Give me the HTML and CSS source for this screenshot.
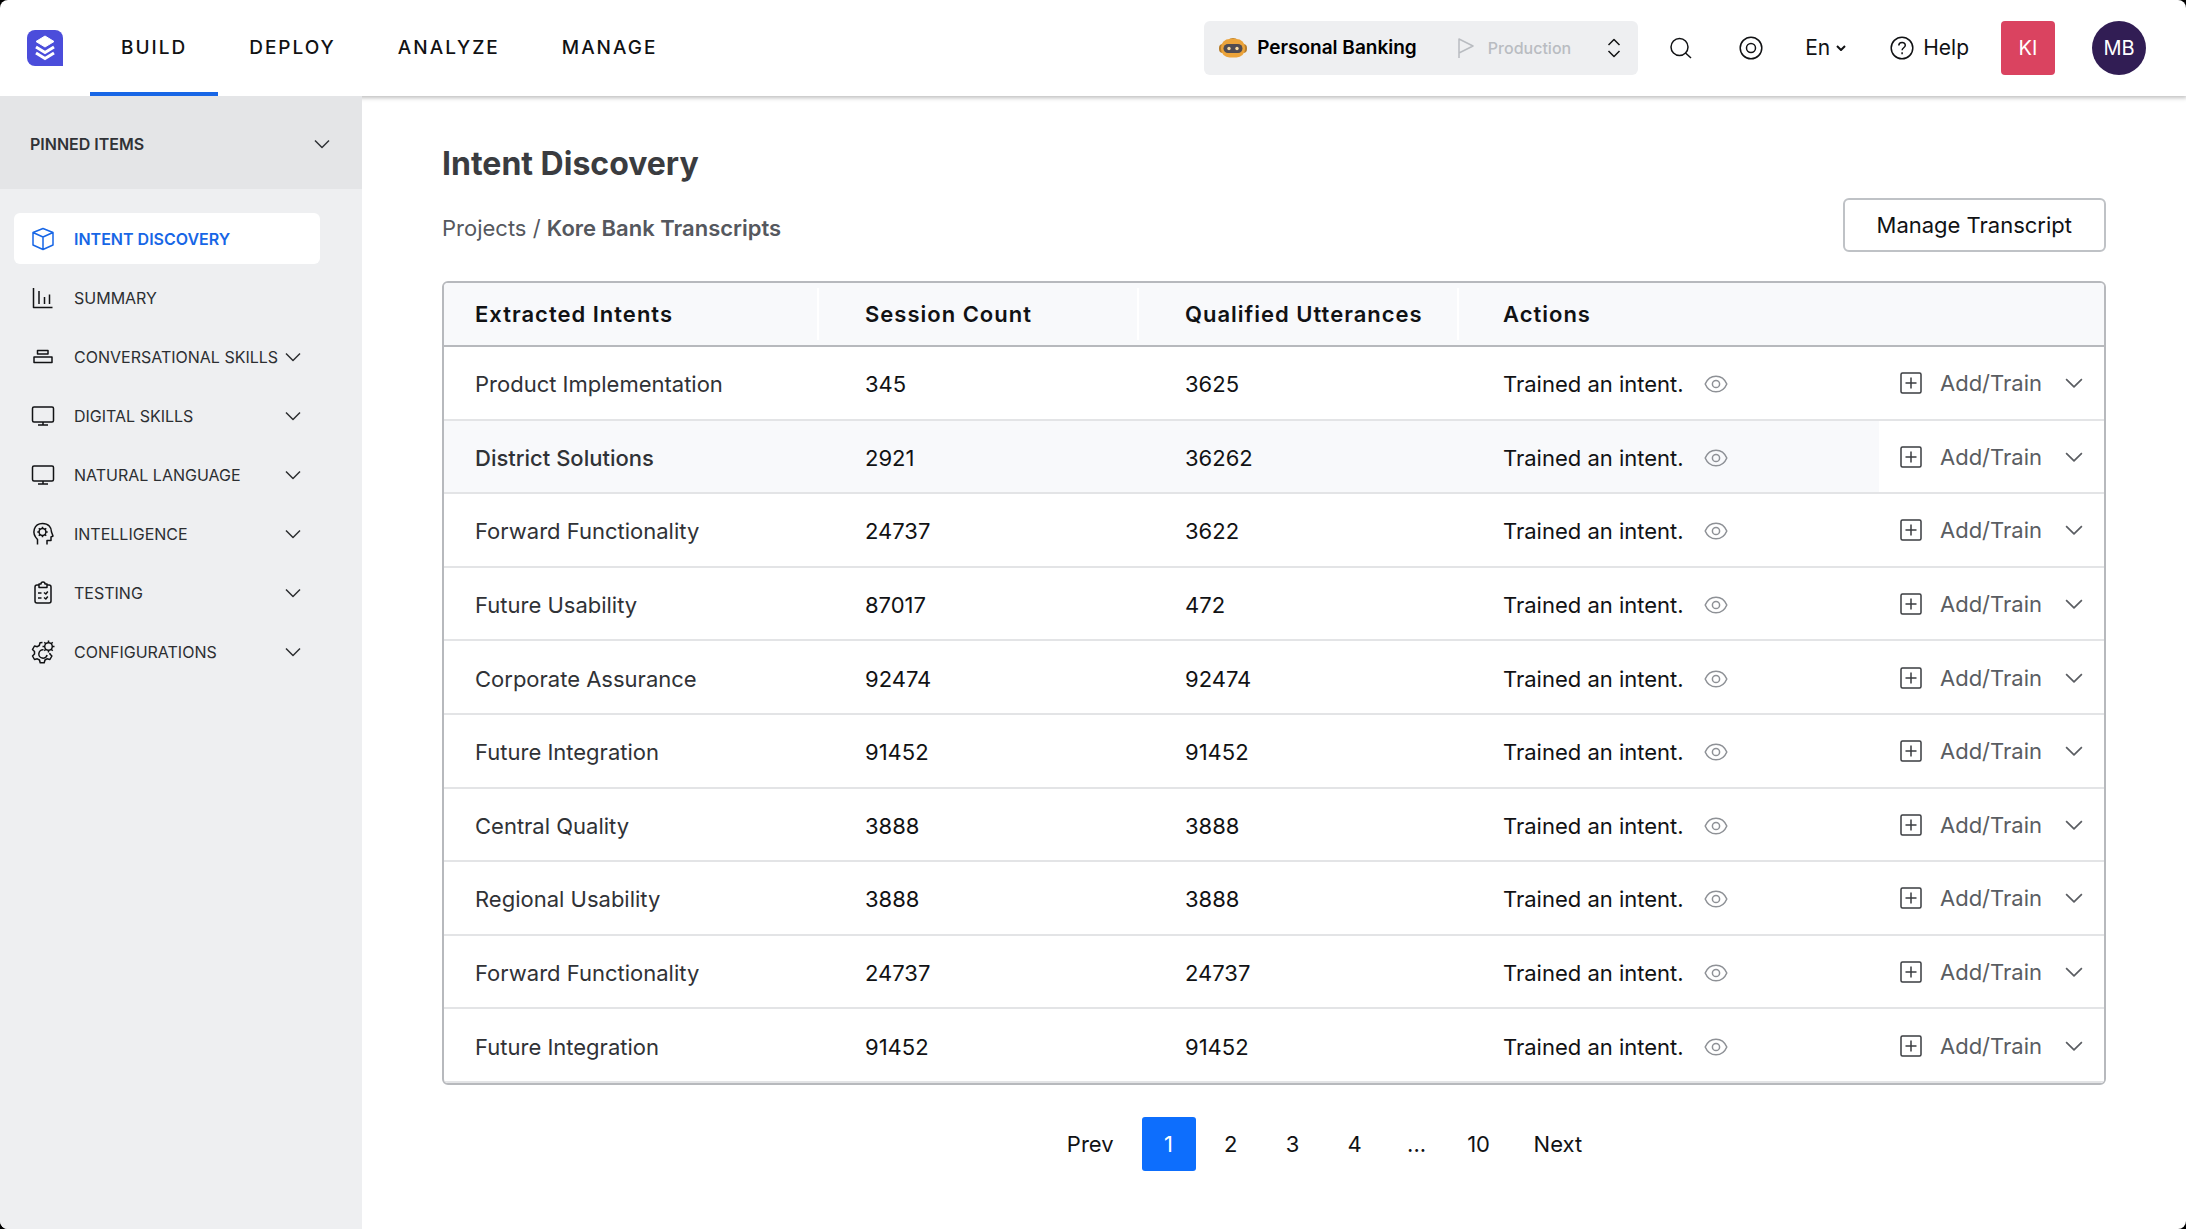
FILE: index.html
```html
<!DOCTYPE html>
<html lang="en">
<head>
<meta charset="utf-8">
<meta name="viewport" content="width=device-width, initial-scale=1">
<title>Intent Discovery</title>
<link rel="stylesheet" href="styles.css">
</head>
<body>
<svg class="sprite" aria-hidden="true">
  <symbol id="chevron" viewBox="0 0 16 10"><path d="M1 1.5l7 7 7-7"/></symbol>
  <symbol id="eye" viewBox="0 0 24 18"><path d="M1.2 9C3.2 4.200 7 1.200 12 1.200S20.800 4.200 22.800 9C20.800 13.800 17 16.800 12 16.800S3.200 13.800 1.200 9z"/><circle cx="12" cy="9" r="3.600"/></symbol>
  <symbol id="plus" viewBox="0 0 22 22"><rect x="1" y="1" width="20" height="20" rx="1.500"/><path d="M11 5.500v11M5.500 11h11"/></symbol>
  <symbol id="monitor" viewBox="0 0 24 24"><rect x="1.500" y="3" width="21" height="15" rx="1.500"/><path d="M12 18v3M7 21h10"/></symbol>
</svg>
<div class="app">
  <header class="topbar">
    <a class="logo" href="#" aria-label="Home">
      <svg width="36" height="36" viewBox="0 0 36 36"><path d="M8 0h20a8 8 0 0 1 8 8v28H8a8 8 0 0 1-8-8V8a8 8 0 0 1 8-8z" fill="#4b4ddb"/><path d="M18 6l9 5.500-9 5.500-9-5.500z" fill="#fff" stroke="#fff" stroke-linejoin="round"/><path d="M9 17l9 5.500 9-5.500M9 23l9 5.500 9-5.500" fill="none" stroke="#fff" stroke-width="3"/></svg>
    </a>
    <nav class="tabs" aria-label="Main">
      <a class="tab tab-active" href="#">BUILD</a>
      <a class="tab" href="#">DEPLOY</a>
      <a class="tab" href="#">ANALYZE</a>
      <a class="tab" href="#">MANAGE</a>
    </nav>
    <button class="switcher" type="button">
      <svg width="28" height="20" viewBox="0 0 28 20"><ellipse cx="14" cy="2" rx="4" ry="2" fill="#c98a2c"/><rect x="0" y="6" width="28" height="9" rx="4" fill="#b87d2a"/><rect x="2" y="1" width="24" height="18.500" rx="8.500" fill="#eba33a"/><rect x="4.500" y="6" width="19" height="9" rx="4.500" fill="#4f4b52"/><circle cx="10" cy="10.500" r="1.700" fill="#f7d9a0"/><circle cx="18" cy="10.500" r="1.700" fill="#f7d9a0"/></svg>
      <span class="bot-name">Personal Banking</span>
      <svg class="line-icon flag" width="16" height="20" viewBox="0 0 16 20"><path d="M1 20V1l14 7-14 7"/></svg>
      <span class="env-name">Production</span>
      <svg class="line-icon" width="14" height="20" viewBox="0 0 14 20"><path d="M1.500 7L7 1.500 12.500 7M1.500 13L7 18.500l5.500-5.500"/></svg>
    </button>
    <div class="tools">
      <button class="tool" type="button" aria-label="Search"><svg class="line-icon" width="22" height="22" viewBox="0 0 22 22"><circle cx="9.500" cy="10" r="8.500"/><path d="M15.500 16l5.500 5"/></svg></button>
      <button class="tool" type="button" aria-label="Activity"><svg class="line-icon" width="24" height="24" viewBox="0 0 24 24"><circle cx="12" cy="12" r="10.800"/><circle cx="12" cy="12" r="4.500"/></svg></button>
      <button class="tool lang" type="button">En <svg class="line-icon thick" width="10" height="6" viewBox="0 0 10 6"><path d="M1 1l4 4 4-4"/></svg></button>
      <a class="tool help" href="#"><svg class="line-icon" width="24" height="24" viewBox="0 0 24 24"><circle cx="12" cy="12" r="10.800"/><path d="M8.800 9.500c0-4 6.500-4 6.500-.3 0 2.600-3.200 2.500-3.200 5.100M12.100 16.300v1.900"/></svg>Help</a>
      <button class="workspace" type="button">KI</button>
      <button class="avatar" type="button">MB</button>
    </div>
  </header>

  <div class="body">
    <aside class="sidebar">
      <button class="pinned" type="button">PINNED ITEMS <svg class="line-icon" width="16" height="10"><use href="#chevron"/></svg></button>
      <nav class="menu" aria-label="Build">
        <a class="item item-active" href="#"><svg class="line-icon" width="24" height="24" viewBox="0 0 24 24"><path d="M12 1.500l10 4v12.500l-10 4.500-10-4.500V5.500zM2 5.500l10 4.500 10-4.500M12 10v12.500"/></svg>INTENT DISCOVERY</a>
        <a class="item" href="#"><svg class="line-icon" width="24" height="24" viewBox="0 0 24 24"><path d="M2.500 2v19.500H21.500M8 5v13M13.500 11v7M18.500 8.500v9.500"/></svg>SUMMARY</a>
        <a class="item" href="#"><svg class="line-icon" width="24" height="24" viewBox="0 0 24 24"><rect x="6.500" y="5.500" width="10.500" height="3.500"/><rect x="3" y="12" width="18" height="5.500"/></svg>CONVERSATIONAL SKILLS<svg class="line-icon caret" width="16" height="10"><use href="#chevron"/></svg></a>
        <a class="item" href="#"><svg class="line-icon" width="24" height="24"><use href="#monitor"/></svg>DIGITAL SKILLS<svg class="line-icon caret" width="16" height="10"><use href="#chevron"/></svg></a>
        <a class="item" href="#"><svg class="line-icon" width="24" height="24"><use href="#monitor"/></svg>NATURAL LANGUAGE<svg class="line-icon caret" width="16" height="10"><use href="#chevron"/></svg></a>
        <a class="item" href="#"><svg class="line-icon" width="24" height="24" viewBox="0 0 24 24"><path d="M6.500 22.500v-5C0 11 3 1.500 11.500 1.500c6 0 9 4 9 8.500l1.500 4-2 1v3.500h-4v4"/><circle cx="11.500" cy="10" r="3.400"/><path d="M11.500 4.800v1.800M11.500 13.400v1.800M6.300 10h1.800M14.900 10h1.800M7.800 6.300l1.300 1.300M13.900 12.400l1.300 1.300M15.200 6.300l-1.300 1.300M9.100 12.400l-1.300 1.300"/></svg>INTELLIGENCE<svg class="line-icon caret" width="16" height="10"><use href="#chevron"/></svg></a>
        <a class="item" href="#"><svg class="line-icon" width="24" height="24" viewBox="0 0 24 24"><path d="M8 4H6a2 2 0 0 0-2 2v14a2 2 0 0 0 2 2h12a2 2 0 0 0 2-2V6a2 2 0 0 0-2-2h-2M8 3h2a2 2 0 0 1 4 0h2v3.500H8zM7 12h3.500M7 17h3.500M13 11.500l1.800 1.500 2-2.500M13 16.500l1.800 1.500 2-2.500"/></svg>TESTING<svg class="line-icon caret" width="16" height="10"><use href="#chevron"/></svg></a>
        <a class="item" href="#"><svg class="line-icon" width="24" height="24" viewBox="0 0 24 24"><path d="M11.500 2.500L9 2.800l-.7 2.700-2 1.200L3.500 6 1.500 9.500l2 2v2.500l-2 2 2 3.500 2.800-.7 2.200 1.200.7 2.700h4l.8-2.700 2-1.200 2.900.7 2-3.500-2-2v-1"/><path d="M12.500 9.800a4.200 4.200 0 1 0 3.600 5.200"/><circle cx="17.500" cy="6.500" r="3.800"/><path d="M17.500.5v2.200M17.500 10.300v2.200M11.500 6.500h2.200M21.300 6.500h2.200M13.300 2.300l1.500 1.500M20.200 9.200l1.500 1.500M21.700 2.300l-1.500 1.500M14.800 9.200l-1.500 1.500"/></svg>CONFIGURATIONS<svg class="line-icon caret" width="16" height="10"><use href="#chevron"/></svg></a>
      </nav>
    </aside>

    <main class="content">
      <h1 class="title">Intent Discovery</h1>
      <div class="subhead">
        <nav class="crumbs" aria-label="Breadcrumb"><a href="#">Projects</a> / <strong>Kore Bank Transcripts</strong></nav>
        <button class="outline-button" type="button">Manage Transcript</button>
      </div>
      <div class="table-card">
        <table class="intents">
          <thead>
            <tr><th class="col-intent" scope="col">Extracted Intents</th><th class="col-count" scope="col">Session Count</th><th class="col-count" scope="col">Qualified Utterances</th><th scope="col">Actions</th><td class="col-train"></td></tr>
          </thead>
          <tbody>
            <tr><td>Product Implementation</td><td>345</td><td>3625</td><td><span class="status">Trained an intent. <svg class="line-icon" width="24" height="18"><use href="#eye"/></svg></span></td><td><button class="train" type="button"><svg class="line-icon" width="22" height="22"><use href="#plus"/></svg>Add/Train<svg class="line-icon caret" width="18" height="12"><use href="#chevron"/></svg></button></td></tr>
            <tr class="row-current"><td>District Solutions</td><td>2921</td><td>36262</td><td><span class="status">Trained an intent. <svg class="line-icon" width="24" height="18"><use href="#eye"/></svg></span></td><td><button class="train" type="button"><svg class="line-icon" width="22" height="22"><use href="#plus"/></svg>Add/Train<svg class="line-icon caret" width="18" height="12"><use href="#chevron"/></svg></button></td></tr>
            <tr><td>Forward Functionality</td><td>24737</td><td>3622</td><td><span class="status">Trained an intent. <svg class="line-icon" width="24" height="18"><use href="#eye"/></svg></span></td><td><button class="train" type="button"><svg class="line-icon" width="22" height="22"><use href="#plus"/></svg>Add/Train<svg class="line-icon caret" width="18" height="12"><use href="#chevron"/></svg></button></td></tr>
            <tr><td>Future Usability</td><td>87017</td><td>472</td><td><span class="status">Trained an intent. <svg class="line-icon" width="24" height="18"><use href="#eye"/></svg></span></td><td><button class="train" type="button"><svg class="line-icon" width="22" height="22"><use href="#plus"/></svg>Add/Train<svg class="line-icon caret" width="18" height="12"><use href="#chevron"/></svg></button></td></tr>
            <tr><td>Corporate Assurance</td><td>92474</td><td>92474</td><td><span class="status">Trained an intent. <svg class="line-icon" width="24" height="18"><use href="#eye"/></svg></span></td><td><button class="train" type="button"><svg class="line-icon" width="22" height="22"><use href="#plus"/></svg>Add/Train<svg class="line-icon caret" width="18" height="12"><use href="#chevron"/></svg></button></td></tr>
            <tr><td>Future Integration</td><td>91452</td><td>91452</td><td><span class="status">Trained an intent. <svg class="line-icon" width="24" height="18"><use href="#eye"/></svg></span></td><td><button class="train" type="button"><svg class="line-icon" width="22" height="22"><use href="#plus"/></svg>Add/Train<svg class="line-icon caret" width="18" height="12"><use href="#chevron"/></svg></button></td></tr>
            <tr><td>Central Quality</td><td>3888</td><td>3888</td><td><span class="status">Trained an intent. <svg class="line-icon" width="24" height="18"><use href="#eye"/></svg></span></td><td><button class="train" type="button"><svg class="line-icon" width="22" height="22"><use href="#plus"/></svg>Add/Train<svg class="line-icon caret" width="18" height="12"><use href="#chevron"/></svg></button></td></tr>
            <tr><td>Regional Usability</td><td>3888</td><td>3888</td><td><span class="status">Trained an intent. <svg class="line-icon" width="24" height="18"><use href="#eye"/></svg></span></td><td><button class="train" type="button"><svg class="line-icon" width="22" height="22"><use href="#plus"/></svg>Add/Train<svg class="line-icon caret" width="18" height="12"><use href="#chevron"/></svg></button></td></tr>
            <tr><td>Forward Functionality</td><td>24737</td><td>24737</td><td><span class="status">Trained an intent. <svg class="line-icon" width="24" height="18"><use href="#eye"/></svg></span></td><td><button class="train" type="button"><svg class="line-icon" width="22" height="22"><use href="#plus"/></svg>Add/Train<svg class="line-icon caret" width="18" height="12"><use href="#chevron"/></svg></button></td></tr>
            <tr><td>Future Integration</td><td>91452</td><td>91452</td><td><span class="status">Trained an intent. <svg class="line-icon" width="24" height="18"><use href="#eye"/></svg></span></td><td><button class="train" type="button"><svg class="line-icon" width="22" height="22"><use href="#plus"/></svg>Add/Train<svg class="line-icon caret" width="18" height="12"><use href="#chevron"/></svg></button></td></tr>
          </tbody>
        </table>
      </div>
      <nav class="pager" aria-label="Pages">
        <a class="page" href="#">Prev</a>
        <a class="page page-active" href="#" aria-current="page">1</a>
        <a class="page" href="#">2</a>
        <a class="page" href="#">3</a>
        <a class="page" href="#">4</a>
        <span class="page">...</span>
        <a class="page" href="#">10</a>
        <a class="page" href="#">Next</a>
      </nav>
    </main>
  </div>
</div>
</body>
</html>
```
FILE: styles.css
```css
* { box-sizing: border-box; }
body { margin: 0; background: #000; color: #111214; font-family: Inter, "Liberation Sans", sans-serif; font-size: 22px; line-height: 28px; }
button { margin: 0; padding: 0; border: 0; background: none; color: inherit; font: inherit; cursor: pointer; }
a { color: inherit; text-decoration: none; }
svg { flex: none; display: block; }
.sprite { position: absolute; width: 0; height: 0; }
.line-icon { fill: none; stroke: currentColor; stroke-width: 1.5; stroke-linejoin: round; }
.thick { stroke-width: 2; }
.caret { margin-left: auto; }

.app { display: flex; flex-direction: column; min-height: 100vh; overflow: hidden; border-radius: 8px; background: #fff; }
.body { display: flex; flex: 1; }

/* Top bar */
.topbar { display: flex; align-items: center; height: 96px; padding: 0 40px 0 27px; box-shadow: 0 1px 4px 1px rgba(0, 0, 0, .25); font-size: 20px; }
.logo { margin-right: 27px; }
.tabs { display: flex; align-self: stretch; margin-right: auto; }
.tab { display: flex; align-items: center; padding: 6px 31px 2px; border-bottom: 4px solid transparent; font-size: 19px; font-weight: 500; letter-spacing: 2px; }
.tab-active { border-bottom-color: #1766e6; }
.switcher { display: flex; align-items: center; width: 434px; height: 54px; padding: 0 17px 0 15px; border-radius: 6px; background: #eeeff1; }
.bot-name { margin-left: 10px; color: #000; font-size: 19px; font-weight: 600; }
.flag { margin-left: auto; color: #b9bcc1; }
.env-name { margin: 0 36px 0 14px; color: #b9bcc1; font-size: 16px; font-weight: 500; }
.tools { display: flex; align-items: center; margin-left: 32px; }
.tool { display: flex; align-items: center; }
.tool + .tool { margin-left: 47px; }
.tool.lang { gap: 6px; margin-left: 42px; font-size: 21px; }
.tool.help { gap: 9px; margin-left: 44px; font-size: 21px; }
.workspace, .avatar { width: 54px; height: 54px; color: #fff; }
.workspace { margin-left: 32px; border-radius: 4px; background: #da4360; }
.avatar { margin-left: 37px; border-radius: 50%; background: #311d54; }

/* Sidebar */
.sidebar { width: 362px; flex: none; background: #eeeff1; font-size: 16px; line-height: 24px; }
.pinned { display: flex; align-items: center; justify-content: space-between; width: 100%; height: 93px; padding: 2px 32px 0 30px; background: #e4e5e7; color: #303236; font-weight: 600; }
.menu { display: flex; flex-direction: column; gap: 8px; padding: 24px 42px 24px 14px; }
.item { display: flex; align-items: center; height: 51px; padding: 0 19px 0 17px; border-radius: 6px; color: #2c2e31; white-space: nowrap; }
.item > svg:first-child { margin-right: 19px; color: #111214; }
.item-active { background: #fff; color: #1766e6; font-weight: 600; }
.item.item-active > svg:first-child { color: inherit; }

/* Content */
.content { flex: 1; min-width: 0; padding: 48px 80px 56px; }
.title { margin: 0; color: #3a3c40; font-size: 32px; line-height: 40px; font-weight: 700; }
.subhead { display: flex; align-items: center; justify-content: space-between; margin: 14px 0 29px; }
.crumbs { padding-top: 6px; color: #55585e; }
.crumbs strong { font-weight: 600; }
.outline-button { height: 54px; padding: 0 32px; border: 2px solid #bfc2c6; border-radius: 6px; color: #111214; }

.table-card { overflow: hidden; border: 2px solid #b7b9bd; border-radius: 6px; }
.intents { width: 100%; height: 800px; border-collapse: separate; border-spacing: 0; table-layout: fixed; }
.intents thead tr { height: 64px; background: #f8f9fb; }
.intents th, .intents td { padding: 0 0 0 48px; text-align: left; }
.intents th { font-weight: 600; letter-spacing: 1px; }
.intents thead th, .intents thead td { border-bottom: 2px solid #b7b9bd; }
.intents th + th { background: linear-gradient(#fff, #fff) left center / 2px 52px no-repeat; }
.intents tbody td { padding-top: 3px; border-bottom: 2px solid #e3e4e6; }
.intents tr > :first-child { padding-left: 31px; }
.intents tr > :nth-child(4) { padding-left: 46px; }
.intents tbody td:first-child { color: #303236; }
.col-intent { width: 373px; }
.col-count { width: 320px; }
.col-train { width: 225px; }
.row-current { background: #f8f9fb; }
.row-current td:first-child { font-weight: 500; }
.intents tbody td:last-child { padding: 1px 21px 0; background: #fff; }
.status { display: flex; align-items: center; gap: 20px; }
.status svg { color: #8e9196; }
.train { display: flex; align-items: center; width: 100%; color: #5a5d62; }
.train svg:first-child { margin-right: 18px; color: #3a3c40; }

/* Pager */
.pager { display: flex; justify-content: center; gap: 8px; margin-top: 32px; padding-left: 101px; }
.page { display: flex; align-items: center; justify-content: center; min-width: 54px; height: 54px; border-radius: 3px; }
.page:first-child, .page:last-child { padding: 0 20px; }
.page-active { background: #0d6efd; color: #fff; }
```
